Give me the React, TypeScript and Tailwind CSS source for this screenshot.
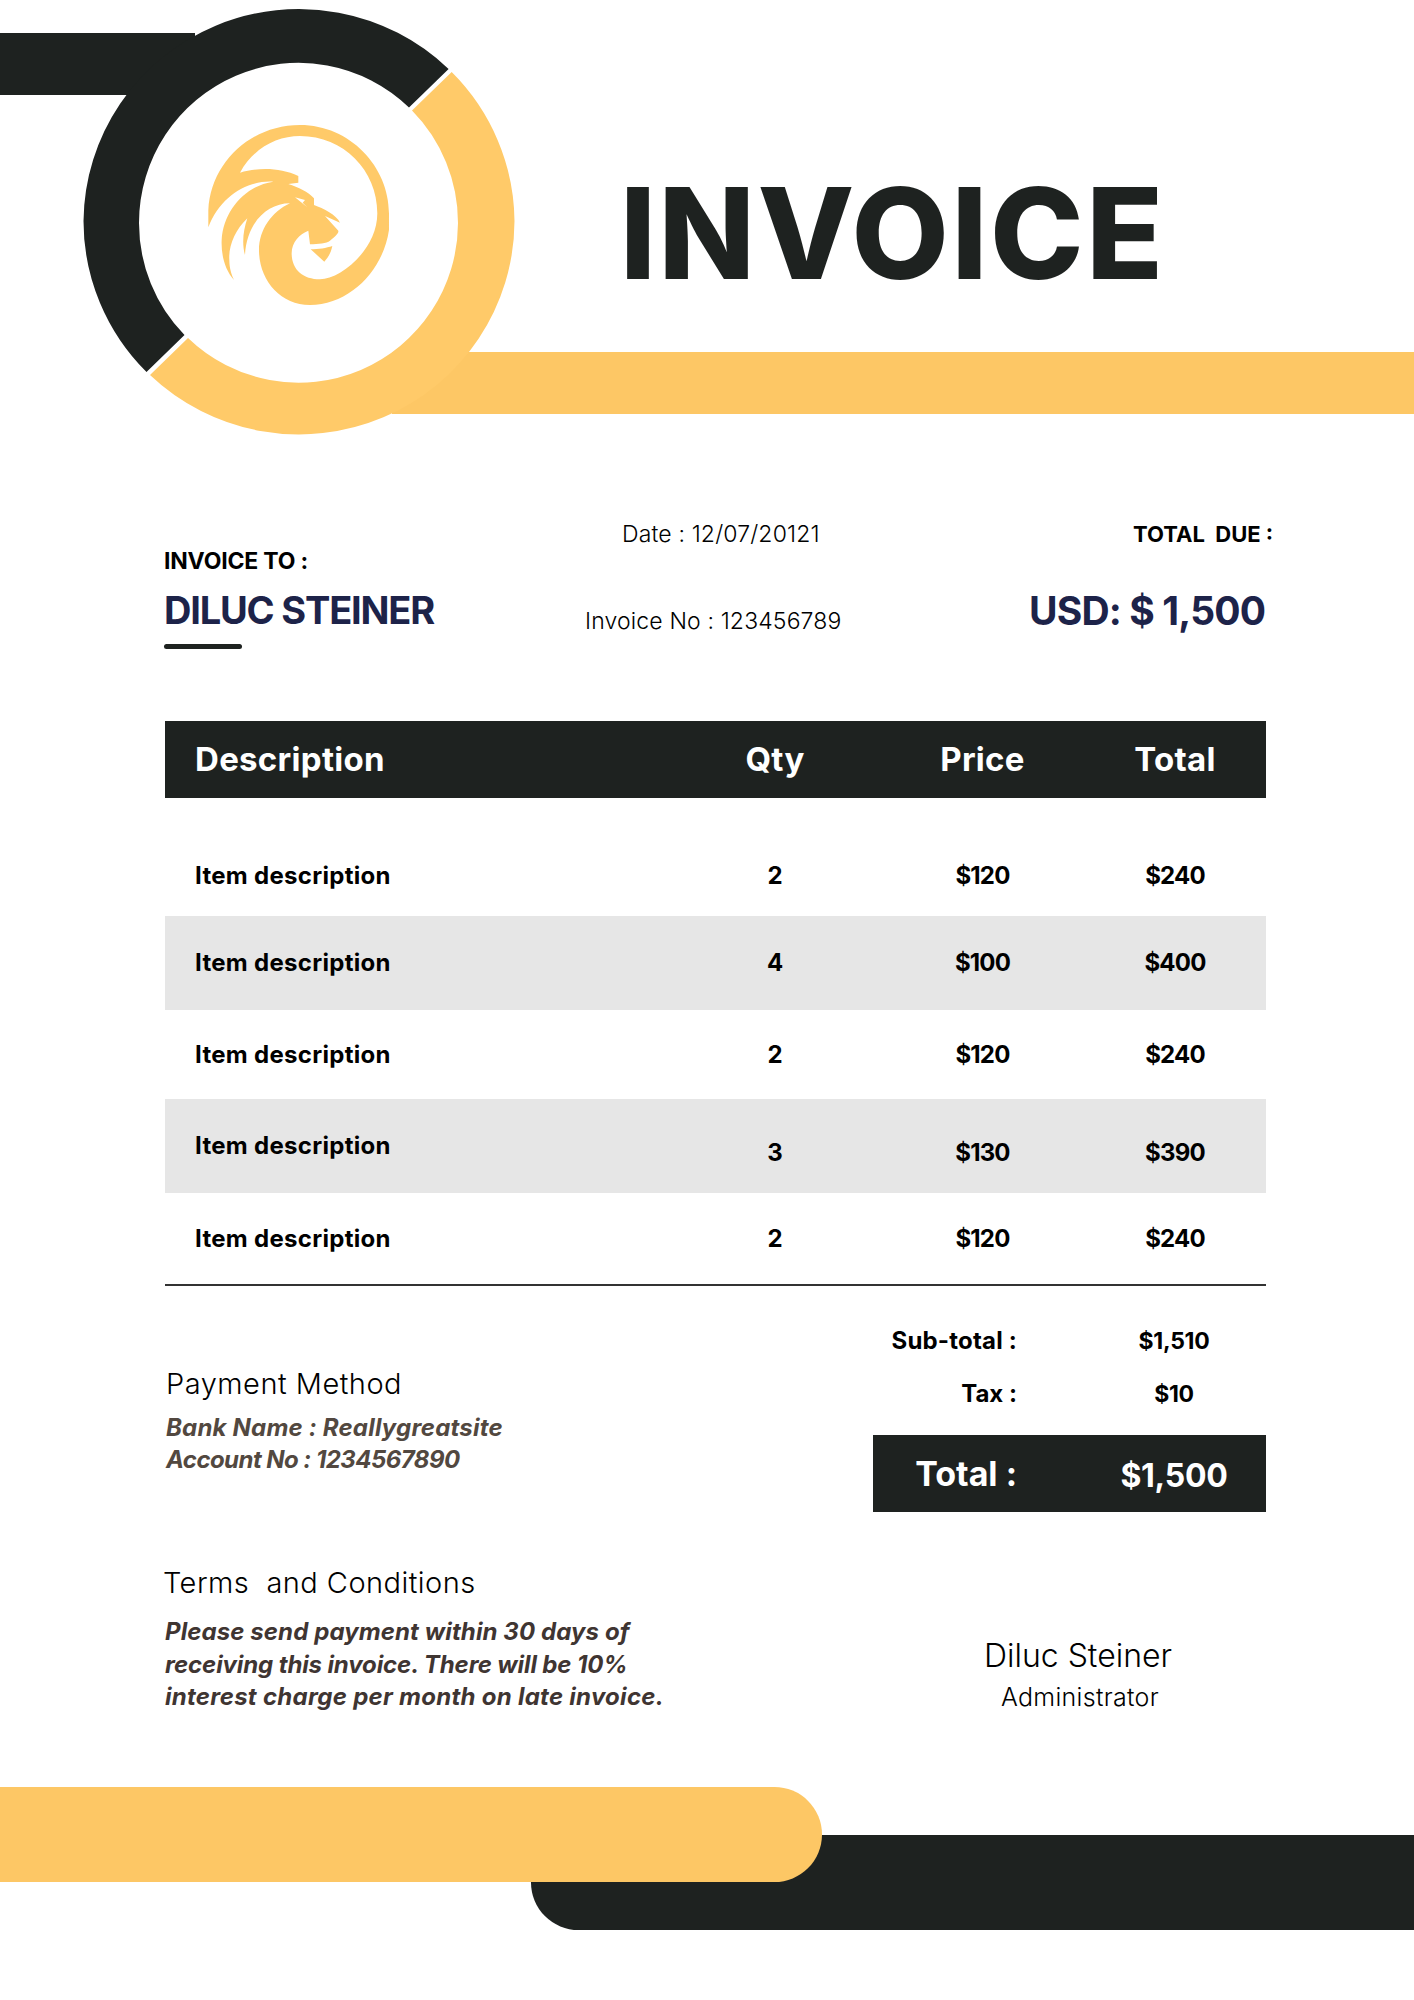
import React from "react";

const rows = [
  { desc: "Item description", qty: "2", price: "$120", total: "$240", rowClass: "h-[81px] mt-[37px]", numClass: "" },
  { desc: "Item description", qty: "4", price: "$100", total: "$400", rowClass: "h-[94px] bg-[#e6e6e6]", numClass: "" },
  { desc: "Item description", qty: "2", price: "$120", total: "$240", rowClass: "h-[89px]", numClass: "" },
  { desc: "Item description", qty: "3", price: "$130", total: "$390", rowClass: "h-[94px] bg-[#e6e6e6]", numClass: "pt-[14px]" },
  { desc: "Item description", qty: "2", price: "$120", total: "$240", rowClass: "h-[91px]", numClass: "" },
];

function HeaderArt() {
  return (
    <svg width="540" height="450" viewBox="0 0 540 450" className="absolute left-0 top-0">
      <path
        d="M451.7 72 A215.5 214 0 0 1 514.5 221 A215.5 214 0 0 1 150 375 L188 338 A159.5 160 0 0 0 458 223 A159.5 160 0 0 0 412 110.5 Z"
        fill="#ffca69"
      />
      <path
        d="M448.6 69 A215.5 214 0 0 0 83.5 221 A215.5 214 0 0 0 146.5 372 L184.5 335 A159.5 160 0 0 1 139 223 A159.5 160 0 0 1 409 107.5 Z"
        fill="#1e2220"
      />
      <g transform="translate(190 110) scale(0.3333)" fill="#ffca69">
        <path
          fillRule="evenodd"
          d="M55 352 L55 300 C62 160 180 45 330 45 C480 45 597 170 597 310 L597 360 C580 480 480 585 360 585 C270 585 207 510 207 420 C207 360 245 305 300 280 C230 280 170 340 165 435 C155 400 160 360 172 325 C135 360 115 410 118 450 C118 475 125 495 132 510 C105 480 93 435 95 390 C100 300 170 225 250 215 C170 210 90 260 55 352 Z M150 188 C190 115 260 78 330 78 C460 78 562 180 562 310 C562 420 450 508 390 508 C340 508 305 480 305 430 C305 395 330 372 355 362 L360 403 C385 402 410 400 420 392 C435 380 447 370 445 362 L405 318 L450 338 C440 315 400 295 372 285 L372 265 C355 245 325 232 295 222 L325 218 L325 198 C270 172 205 172 150 188 Z M315 262 L345 270 L338 278 L352 292 Z"
        />
        <path d="M362 418 C385 418 410 414 427 408 C423 428 415 442 403 455 Z" />
      </g>
    </svg>
  );
}

export default function App() {
  return (
    <div className="w-[1414px] h-[2000px] bg-white overflow-hidden font-['Inter',sans-serif] text-black">
      {/* Header */}
      <div className="relative h-[520px]">
        <div className="absolute left-0 top-[33px] h-[62px] w-[195px] bg-[#1e2220]" />
        <div className="absolute left-[392px] right-0 top-[352px] h-[62px] bg-[#fdc765]" />
        <HeaderArt />
        <h1 className="absolute left-[620px] top-[157px] text-[126px] leading-[152px] font-extrabold tracking-[2.5px] text-[#1e2220]">
          INVOICE
        </h1>
      </div>

      {/* Invoice meta */}
      <div className="h-[201px] flex pl-[164px]">
        <div className="w-[421px] pt-[29px]">
          <div className="text-[23px] leading-[24px] font-bold tracking-[-0.2px]">INVOICE TO :</div>
          <div className="mt-[15px] text-[38px] leading-[44px] font-bold tracking-[-1.2px] text-[#1d2349]">DILUC STEINER</div>
          <div className="mt-[12px] h-[5px] w-[78px] rounded-full bg-[#1e2220]" />
        </div>
        <div className="w-[420px] pt-[2px]">
          <div className="pl-[37px] text-[23px] leading-[24px] font-light tracking-[0.15px]">Date : 12/07/20121</div>
          <div className="mt-[63px] text-[23px] leading-[24px] font-light tracking-[0.15px]">Invoice No : 123456789</div>
        </div>
        <div className="pt-[2px] flex-1">
          <div className="pl-[128px] text-[22px] leading-[24px] font-bold whitespace-pre">TOTAL  DUE :</div>
          <div className="mt-[43px] pl-[24px] text-[39px] leading-[44px] font-bold tracking-[-0.85px] text-[#1d2349]">USD: $ 1,500</div>
        </div>
      </div>

      {/* Table */}
      <div className="ml-[165px] w-[1101px]">
        <div className="h-[77px] grid grid-cols-[506px_208px_207px_178px] items-center bg-[#1e2220] text-white text-[33px] font-bold tracking-[0.3px]">
          <div className="pl-[30px]">Description</div>
          <div className="text-center">Qty</div>
          <div className="text-center">Price</div>
          <div className="text-center">Total</div>
        </div>
        {rows.map((row, i) => (
          <div key={i} className={`grid grid-cols-[506px_208px_207px_178px] items-center text-[24px] font-bold ${row.rowClass}`}>
            <div className="pl-[30px] tracking-[0.3px]">{row.desc}</div>
            <div className={`text-center ${row.numClass}`}>{row.qty}</div>
            <div className={`text-center tracking-[-0.8px] ${row.numClass}`}>{row.price}</div>
            <div className={`text-center tracking-[-0.8px] ${row.numClass}`}>{row.total}</div>
          </div>
        ))}
        <div className="h-[2px] bg-[#333333]" />
      </div>

      {/* Payment, terms and totals */}
      <div className="flex ml-[165px] w-[1101px] h-[501px]">
        <div className="w-[708px]">
          <div className="mt-[81px] pl-[1px] text-[29px] leading-[34px] font-light tracking-[0.5px]">Payment Method</div>
          <div className="mt-[11px] pl-[1px] text-[24px] leading-[32px] font-bold italic text-[#524840]">
            <div className="tracking-[0.2px]">Bank Name : Reallygreatsite</div>
            <div className="tracking-[-0.55px]">Account No : 1234567890</div>
          </div>
          <div className="mt-[89px] -ml-[2px] text-[29px] leading-[36px] font-light tracking-[0.45px] whitespace-pre">Terms  and Conditions</div>
          <div className="mt-[15px] text-[24px] leading-[32.5px] font-bold italic text-[#3f3532]">
            <div className="tracking-[0.1px]">Please send payment within 30 days of</div>
            <div className="tracking-[-0.12px]">receiving this invoice. There will be 10%</div>
            <div className="tracking-[0.27px]">interest charge per month on late invoice.</div>
          </div>
        </div>
        <div className="w-[393px]">
          <div className="mt-[40px] flex text-[24px] leading-[30px] font-bold">
            <div className="w-[144px] text-right whitespace-nowrap tracking-[0.2px]">Sub-total :</div>
            <div className="ml-[77px] w-[160px] text-center text-[23px] tracking-[-0.3px]">$1,510</div>
          </div>
          <div className="mt-[23px] flex text-[24px] leading-[30px] font-bold">
            <div className="w-[144px] text-right">Tax :</div>
            <div className="ml-[77px] w-[160px] text-center text-[23px] tracking-[-0.3px]">$10</div>
          </div>
          <div className="mt-[26px] h-[77px] flex items-center bg-[#1e2220] text-white text-[34px] font-bold">
            <div className="w-[144px] text-right whitespace-nowrap">Total :</div>
            <div className="ml-[77px] w-[160px] pt-[4px] text-center text-[32px] tracking-[-0.3px]">$1,500</div>
          </div>
          <div className="mt-[124px] pl-[17px] text-center text-[32px] leading-[40px] font-light">Diluc Steiner</div>
          <div className="mt-[7px] pl-[21px] text-center text-[25px] leading-[28px] font-light tracking-[0.3px]">Administrator</div>
        </div>
      </div>

      {/* Footer bars */}
      <div className="relative z-10 h-[95px] w-[822px] rounded-r-[48px] bg-[#fdc765]" />
      <div className="-mt-[47px] ml-[531px] h-[95px] rounded-l-[48px] bg-[#1e2220]" />
    </div>
  );
}
